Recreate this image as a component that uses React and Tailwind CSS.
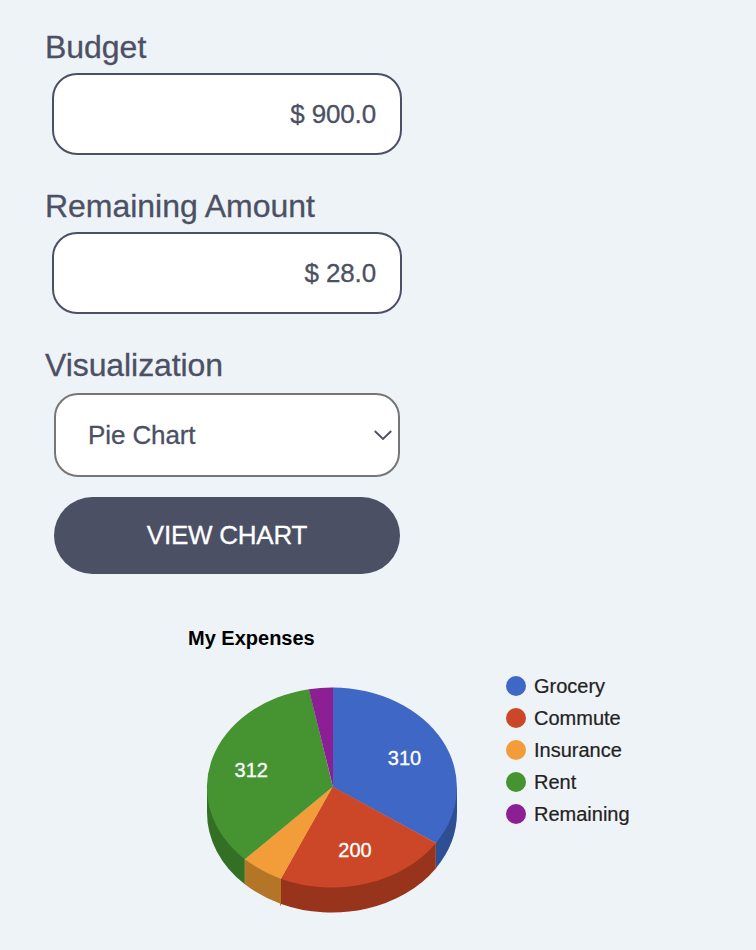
const legend = [
  { label: 'Grocery', dot: 'bg-[#3e67c6]' },
  { label: 'Commute', dot: 'bg-[#cb4728]' },
  { label: 'Insurance', dot: 'bg-[#f29d39]' },
  { label: 'Rent', dot: 'bg-[#459331]' },
  { label: 'Remaining', dot: 'bg-[#8c1f94]' },
];

function Amount({ label, value }) {
  return (
    <label className="block h-[159px]">
      <span className="block h-[45px] text-[32px] leading-[38px] tracking-[-0.03px]">{label}</span>
      <input
        className="ml-[7px] block h-[82px] w-[350px] rounded-[25px] border-2 border-[#4c5064] bg-white pr-[24px] text-right text-[26px] tracking-[-0.15px] outline-none [-webkit-text-stroke:0.3px_#4c5064]"
        defaultValue={value}
      />
    </label>
  );
}

function Pie() {
  return (
    <svg className="absolute left-[206px] top-[80px]" width="252" height="228" viewBox="206 686 252 228">
      <path fill="#2f4f95" d="M457 787.5V812.5A125 100 0 0 1 435.7 868.4V843.4Z" />
      <path fill="#98331c" d="M435.8 843V868.4A125 100 0 0 1 280.5 903.7V878.6Z" />
      <path fill="#b47527" d="M244.8 859V884.3A125 100 0 0 0 280.5 903.7V878.6Z" />
      <path fill="#b47527" d="M280 878.4H281V905.5H280Z" />
      <path fill="#337024" d="M207 787.5V812.5A125 100 0 0 0 244.8 884.3V859Z" />
      <path fill="#3e67c6" d="M332.8 787V687.4A125 100 0 0 1 435.8 843Z" />
      <path fill="#cb4728" d="M332.5 786.5L436 843A125 100 0 0 1 280.7 878.7Z" />
      <path fill="#f29d39" d="M332.8 786.8L281 878.8A125 100 0 0 1 244.8 859Z" />
      <path fill="#459331" d="M332.8 786.8L244.8 859.2A125 100 0 0 1 309 689.2Z" />
      <path fill="#8c1f94" d="M333 787L308.8 689.2A125 100 0 0 1 333 687.5Z" />
      <g
        fill="#fff"
        stroke="#fff"
        strokeWidth="0.3"
        fontSize="20"
        textAnchor="middle"
        fontFamily="'Liberation Sans', Arial, sans-serif"
      >
        <text x="404.5" y="765">310</text>
        <text x="355" y="857">200</text>
        <text x="251.3" y="777">312</text>
      </g>
    </svg>
  );
}

export default function App() {
  return (
    <main className="h-[950px] w-full overflow-hidden bg-[#edf3f7] pt-[28px] font-['Liberation_Sans',Arial,sans-serif] text-[#4c5064]">
      <form className="h-[578px] pl-[45px] [-webkit-text-stroke:0.3px_#4c5064]">
        <Amount label="Budget" value="$ 900.0" />
        <Amount label="Remaining Amount" value="$ 28.0" />
        <div className="h-[47px] text-[32px] leading-[38px] tracking-[-0.08px]">Visualization</div>
        <div className="ml-[9px] flex h-[84px] w-[346px] items-center justify-between rounded-[24px] border-2 border-[#767676] bg-white pl-[32px] pr-[5px] text-[26px] tracking-[-0.1px]">
          <span>Pie Chart</span>
          <svg width="20" height="12" viewBox="0 0 20 12" fill="none" stroke="#4c5064" strokeWidth="1.9">
            <path d="M1.8 2L10 10L18.2 2" />
          </svg>
        </div>
        <button
          type="button"
          className="ml-[9px] mt-[20px] block h-[77px] w-[346px] rounded-full bg-[#4c5064] text-[26px] tracking-[-0.25px] text-white [-webkit-text-stroke:0.3px_#ffffff]"
        >
          VIEW CHART
        </button>
      </form>
      <section className="relative h-[344px] text-[20px]">
        <h2 className="pl-[188px] pt-[20px] font-bold leading-[24px] text-black">My Expenses</h2>
        <Pie />
        <ul className="ml-[506px] mt-[20px] text-[#222222] [-webkit-text-stroke:0.2px_#222222]">
          {legend.map((item) => (
            <li key={item.label} className="flex h-[32px] items-center gap-2">
              <span className={`h-5 w-5 rounded-full ${item.dot}`} />
              {item.label}
            </li>
          ))}
        </ul>
      </section>
    </main>
  );
}
